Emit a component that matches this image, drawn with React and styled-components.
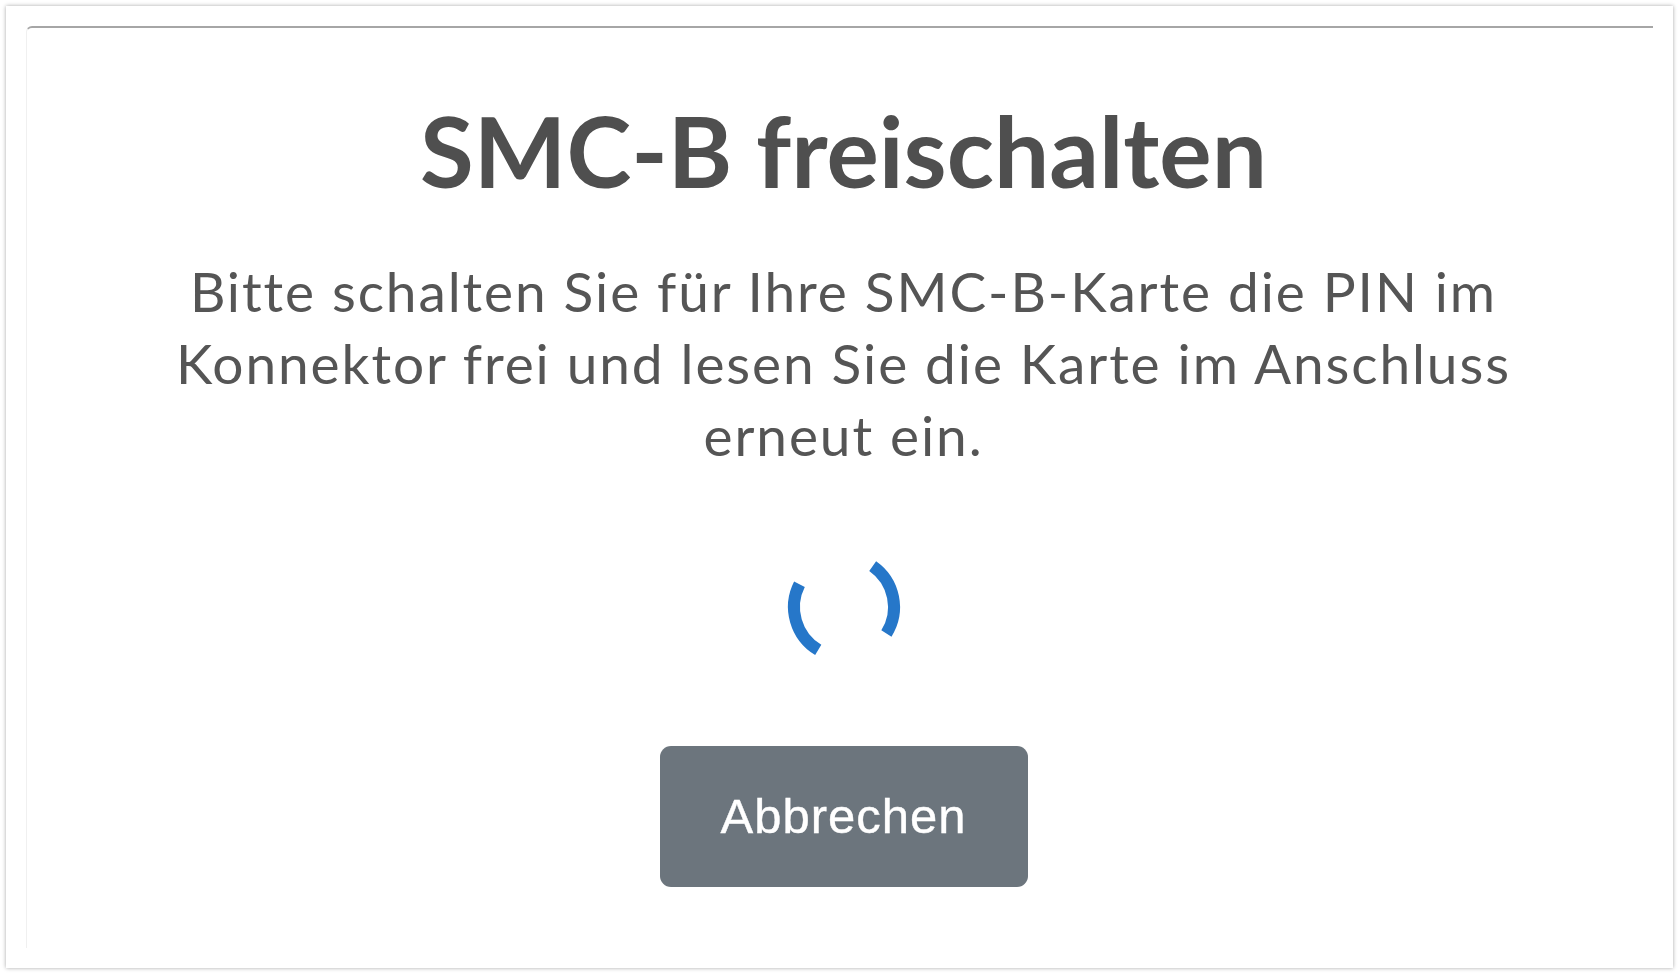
import styled, { createGlobalStyle } from 'styled-components';

const GlobalStyle = createGlobalStyle`
	html, body {
		margin: 0;
		padding: 0;
		background: #ffffff;
	}
	body {
		font-family: Lato, "Noto Sans", sans-serif;
	}
`;

const Frame = styled.div`
	margin: 6px;
	height: 962px;
	box-sizing: border-box;
	padding: 20px;
	background: #ffffff;
	box-shadow: 0 0 4px rgba(0, 0, 0, 0.35);
`;

const Panel = styled.div`
	height: 100%;
	box-sizing: border-box;
	border-top: 2px solid #a6a6a6;
	border-left: 1px solid #f0f0f0;
	border-top-left-radius: 6px;
	padding: 69px 0 0 7px;
	display: flex;
	flex-direction: column;
	align-items: center;
`;

const Title = styled.h1`
	margin: 0;
	font-family: Lato, "Noto Sans", sans-serif;
	font-size: 98px;
	font-weight: 700;
	line-height: 1.1;
	color: #4f4f4f;
	text-align: center;
`;

const Message = styled.p`
	margin: 50px 0 0;
	max-width: 1380px;
	font-family: Lato, "Noto Sans", sans-serif;
	font-size: 55px;
	line-height: 72px;
	letter-spacing: 1.9px;
	color: #555555;
	text-align: center;
`;

const SpinnerBox = styled.div`
	margin-top: 74px;
	width: 124px;
	height: 124px;
`;

const CancelButton = styled.button`
	margin-top: 77px;
	width: 368px;
	height: 141px;
	border: none;
	border-radius: 11px;
	background: #6c757d;
	color: #ffffff;
	font-family: "Liberation Sans", Arial, sans-serif;
	font-size: 49px;
	letter-spacing: 1px;
	-webkit-text-stroke: 0.4px #ffffff;
	cursor: pointer;
`;

function arc(cx, cy, r, from, to) {
	const rad = a => (a * Math.PI) / 180;
	const x1 = cx + r * Math.cos(rad(from));
	const y1 = cy + r * Math.sin(rad(from));
	const x2 = cx + r * Math.cos(rad(to));
	const y2 = cy + r * Math.sin(rad(to));
	return `M ${x1} ${y1} A ${r} ${r} 0 0 1 ${x2} ${y2}`;
}

function Spinner() {
	return (
		<SpinnerBox>
			<svg width="124" height="124" viewBox="0 0 124 124">
				<path
					d={arc(62, 62, 50, -55, 32)}
					fill="none"
					stroke="#2677c9"
					strokeWidth="12"
				/>
				<path
					d={arc(62, 62, 50, 121, 207)}
					fill="none"
					stroke="#2677c9"
					strokeWidth="12"
				/>
			</svg>
		</SpinnerBox>
	);
}

export default function App() {
	return (
		<>
			<GlobalStyle />
			<Frame>
				<Panel>
					<Title>SMC-B freischalten</Title>
					<Message>
						Bitte schalten Sie für Ihre SMC-B-Karte die PIN im Konnektor frei
						und lesen Sie die Karte im Anschluss erneut ein.
					</Message>
					<Spinner />
					<CancelButton>Abbrechen</CancelButton>
				</Panel>
			</Frame>
		</>
	);
}
